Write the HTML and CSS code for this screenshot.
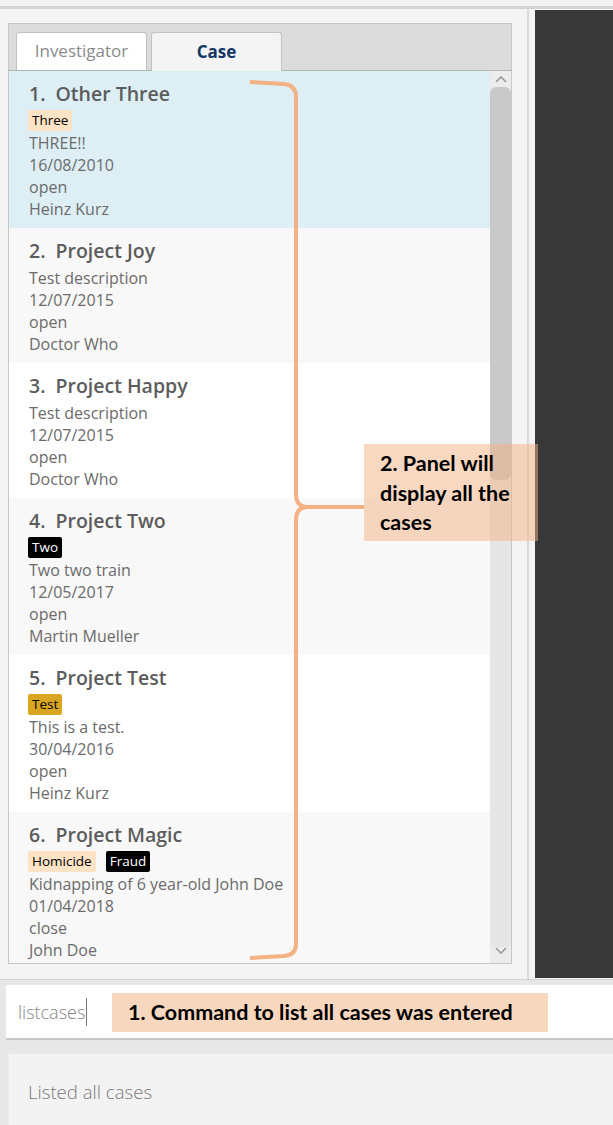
FILE: index.html
```html
<!DOCTYPE html>
<html>
<head>
<meta charset="utf-8">
<link rel="stylesheet" href="styles.css">
</head>
<body>
<div class="topbar"></div>
<div class="main">
  <div class="left">
    <div class="panel">
      <div class="tabs">
        <div class="tab">Investigator</div>
        <div class="tab active">Case</div>
      </div>
      <div class="body">
        <div class="list">
          <div class="card sel">
            <div class="title"><span class="num">1.</span><span>Other Three</span></div>
            <div class="tags"><span class="tag peach">Three</span></div>
            <div>THREE!!</div><div>16/08/2010</div><div>open</div><div>Heinz Kurz</div>
          </div>
          <div class="card alt">
            <div class="title"><span class="num">2.</span><span>Project Joy</span></div>
            <div>Test description</div><div>12/07/2015</div><div>open</div><div>Doctor Who</div>
          </div>
          <div class="card">
            <div class="title"><span class="num">3.</span><span>Project Happy</span></div>
            <div>Test description</div><div>12/07/2015</div><div>open</div><div>Doctor Who</div>
          </div>
          <div class="card alt">
            <div class="title"><span class="num">4.</span><span>Project Two</span></div>
            <div class="tags"><span class="tag black">Two</span></div>
            <div>Two two train</div><div>12/05/2017</div><div>open</div><div>Martin Mueller</div>
          </div>
          <div class="card">
            <div class="title"><span class="num">5.</span><span>Project Test</span></div>
            <div class="tags"><span class="tag gold">Test</span></div>
            <div>This is a test.</div><div>30/04/2016</div><div>open</div><div>Heinz Kurz</div>
          </div>
          <div class="card alt">
            <div class="title"><span class="num">6.</span><span>Project Magic</span></div>
            <div class="tags"><span class="tag peach">Homicide</span><span class="tag black">Fraud</span></div>
            <div>Kidnapping of 6 year-old John Doe</div><div>01/04/2018</div><div>close</div><div>John Doe</div>
          </div>
        </div>
        <div class="scroll">
          <div class="arrow"><svg width="12" height="8" viewBox="0 0 12 8"><path d="M1 7 L6 2 L11 7" fill="none" stroke="#9a9a9a" stroke-width="1.6"/></svg></div>
          <div class="thumb"></div>
          <div class="track"></div>
          <div class="arrow down"><svg width="12" height="8" viewBox="0 0 12 8"><path d="M1 1 L6 6 L11 1" fill="none" stroke="#9a9a9a" stroke-width="1.6"/></svg></div>
        </div>
      </div>
    </div>
  </div>
  <div class="sep"></div>
  <div class="dark"></div>
</div>
<div class="bottom">
  <div class="cmd">
    <span class="cmdtext">listcases</span><span class="caret"></span>
    <div class="note1">1. Command to list all cases was entered</div>
  </div>
  <div class="result">Listed all cases</div>
</div>

<svg class="brace" viewBox="240 75 130 890" width="130" height="890">
  <path d="M250 82 L284 84 Q296 85 296 97 L296 494 Q296 506 306 507 L364 507 M306 507 Q296 508 296 520 L296 944 Q296 955 284 956 L250 958" fill="none" stroke="#f4b183" stroke-width="4"/>
</svg>
<div class="note2">2. Panel will<br>display all the<br>cases</div>
</body>
</html>
```

FILE: styles.css
```css
html, body {
  margin: 0;
  padding: 0;
}
body {
  width: 613px;
  height: 1125px;
  overflow: hidden;
  position: relative;
  background: #f4f4f4;
  font-family: "Open Sans", "Noto Sans", sans-serif;
}
.topbar {
  height: 6px;
  background: #f3f3f3;
  border-bottom: 3px solid #d4d4d4;
}
.main {
  display: flex;
  height: 970px;
}
.left {
  width: 526px;
  padding: 14px 0 0 8px;
  box-sizing: border-box;
}
.panel {
  width: 504px;
  height: 941px;
  border: 1px solid #c6c6c6;
  box-sizing: border-box;
  display: flex;
  flex-direction: column;
  background: #fff;
}
.tabs {
  height: 47px;
  flex: none;
  background: #dcdcdc;
  border-bottom: 1px solid #b5b5b5;
  box-sizing: border-box;
  display: flex;
  align-items: flex-end;
  gap: 4px;
  padding-left: 7px;
}
.tab {
  width: 131px;
  height: 38px;
  box-sizing: border-box;
  border: 1px solid #c2c2c2;
  border-bottom: none;
  border-radius: 3px 3px 0 0;
  background: #fff;
  display: flex;
  align-items: center;
  justify-content: center;
  padding-bottom: 2px;
  font-size: 17px;
  color: #8a8a8a;
}
.tab.active {
  background: #f4f4f4;
  font-weight: 700;
  color: #123766;
  height: 39px;
  margin-bottom: -1px;
}
.body {
  flex: 1;
  display: flex;
  overflow: hidden;
}
.list {
  width: 481px;
  overflow: hidden;
}
.card {
  padding: 9px 0 8px 20px;
  font-size: 16px;
  line-height: 22px;
  color: #6b6b6b;
  background: #fff;
}
.card.sel { background: #ddeef5; }
.card.alt { background: #f8f8f8; }
.title {
  display: flex;
  font-size: 19.5px;
  font-weight: 600;
  line-height: 28px;
  margin-bottom: 2px;
  color: #5c5c5c;
}
.num {
  margin-right: 10px;
}
.tags {
  display: flex;
  gap: 10px;
  height: 21px;
  margin-top: 2px;
  margin-bottom: 1px;
  margin-left: -1px;
}
.tag {
  font-size: 13.5px;
  line-height: 21px;
  padding: 0 4px;
  border-radius: 2px;
  color: #000;
}
.tag.peach { background: #fde3c5; }
.tag.black { background: #000; color: #fff; }
.tag.gold { background: #daa520; }
.scroll {
  width: 21px;
  background: #ececec;
  display: flex;
  flex-direction: column;
  align-items: center;
}
.arrow {
  height: 16px;
  display: flex;
  align-items: center;
  justify-content: center;
}
.arrow.down {
  align-items: flex-start;
}
.thumb {
  width: 21px;
  height: 393px;
  background: #c9c9c9;
  border-radius: 6px;
}
.track {
  flex: 1;
  width: 21px;
  background: #e6e6e6;
}
.sep {
  width: 2px;
  background: #dadada;
  margin-left: 1px;
}
.dark {
  width: 78px;
  margin-left: 6px;
  margin-top: 1px;
  height: 968px;
  background: #383838;
}
.bottom {
  border-top: 1px solid #d4d4d4;
  background: #e7e7e7;
  padding-top: 5px;
  height: 146px;
  box-sizing: border-box;
}
.cmd {
  position: relative;
  margin-left: 6px;
  height: 55px;
  box-sizing: border-box;
  background: #fff;
  border-bottom: 2px solid #c8c8c8;
  display: flex;
  align-items: center;
  padding-left: 12px;
}
.cmdtext {
  font-size: 18px;
  font-weight: 300;
  color: #858585;
}
.caret {
  width: 1px;
  height: 28px;
  background: #777;
  margin-left: 1px;
}
.note1 {
  position: absolute;
  left: 106px;
  top: 8px;
  width: 436px;
  height: 39px;
  box-sizing: border-box;
  padding-left: 16px;
  background: #f8d7bf;
  font-family: "Lato", "Liberation Sans", sans-serif;
  font-weight: 700;
  font-size: 21.5px;
  line-height: 39px;
  color: #000;
  white-space: nowrap;
}
.result {
  margin-top: 13px;
  margin-left: 8px;
  height: 80px;
  background: #f3f3f3;
  border-top: 1px solid #e9e9e9;
  border-left: 1px solid #e9e9e9;
  padding: 25px 0 0 19px;
  box-sizing: border-box;
  font-size: 18.6px;
  font-weight: 300;
  color: #7a7a7a;
}
.brace {
  position: absolute;
  left: 240px;
  top: 75px;
  pointer-events: none;
}
.note2 {
  position: absolute;
  left: 364px;
  top: 444px;
  width: 174px;
  height: 97px;
  box-sizing: border-box;
  padding: 5px 0 0 16px;
  background: rgba(244, 177, 131, 0.5);
  font-family: "Lato", "Liberation Sans", sans-serif;
  font-weight: 700;
  font-size: 21.5px;
  line-height: 29.5px;
  color: #000;
  white-space: nowrap;
}
```
